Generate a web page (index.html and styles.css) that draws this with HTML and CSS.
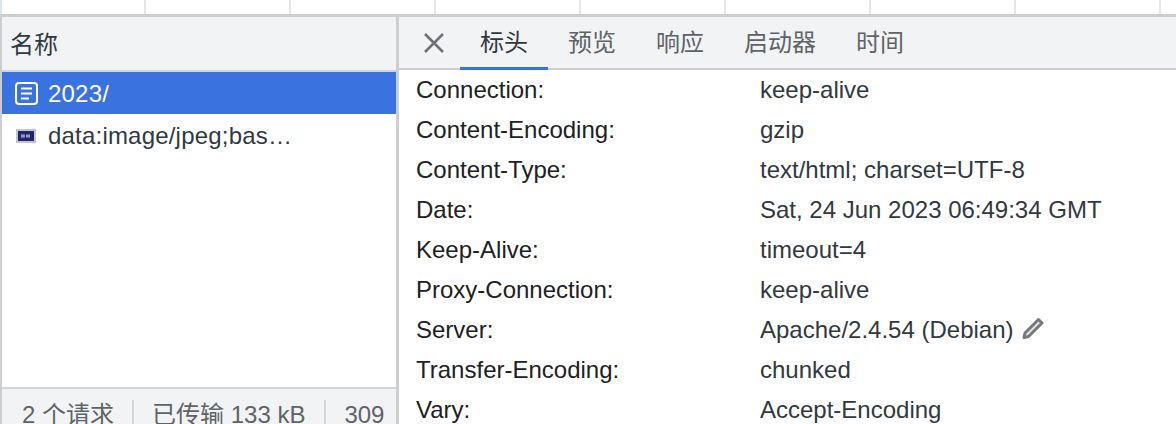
FILE: index.html
```html
<!DOCTYPE html>
<html lang="zh-CN">
<head>
    <meta charset="UTF-8">
    <title>Network</title>
    <link rel="stylesheet" href="styles.css">
</head>
<body>
    <div class="timeline">
        <div class="tick first"></div><div class="tick"></div><div class="tick"></div><div class="tick"></div>
        <div class="tick"></div><div class="tick"></div><div class="tick"></div><div class="tick"></div>
    </div>
    <div class="panels">
        <div class="requests">
            <div class="requests-head">名称</div>
            <div class="requests-list">
                <div class="request selected">
                    <svg class="doc-icon" width="23" height="23" viewBox="0 0 23 23">
                        <rect x="1" y="1" width="21" height="21" rx="3" fill="none" stroke="#fff" stroke-width="2"/>
                        <path d="M6 6.5h11M6 11.5h11M6 16.5h8" stroke="#fff" stroke-width="2" fill="none"/>
                    </svg>
                    <span>2023/</span>
                </div>
                <div class="request">
                    <svg class="thumb-icon" width="20" height="14" viewBox="0 0 20 14">
                        <rect width="20" height="14" fill="#c4c6cb"/>
                        <rect x="2" y="2" width="16" height="10" fill="#1f2a6e"/>
                        <path d="M5 7h10" stroke="#9a98cf" stroke-width="3" stroke-dasharray="4 1"/>
                    </svg>
                    <span>data:image/jpeg;bas…</span>
                </div>
            </div>
            <div class="summary">
                <span class="summary-item">2 个请求</span>
                <span class="summary-item">已传输 133 kB</span>
                <span class="summary-item">309</span>
            </div>
        </div>
        <div class="details">
            <div class="tabbar">
                <svg class="close-icon" width="22" height="22" viewBox="0 0 22 22">
                    <path d="M2 2l18 18M20 2L2 20" stroke="#6e7175" stroke-width="2.6" fill="none"/>
                </svg>
                <div class="tab active">标头</div>
                <div class="tab">预览</div>
                <div class="tab">响应</div>
                <div class="tab">启动器</div>
                <div class="tab">时间</div>
            </div>
            <div class="headers">
                <div class="header-row"><span class="header-name">Connection:</span><span class="header-value">keep-alive</span></div>
                <div class="header-row"><span class="header-name">Content-Encoding:</span><span class="header-value">gzip</span></div>
                <div class="header-row"><span class="header-name">Content-Type:</span><span class="header-value">text/html; charset=UTF-8</span></div>
                <div class="header-row"><span class="header-name">Date:</span><span class="header-value">Sat, 24 Jun 2023 06:49:34 GMT</span></div>
                <div class="header-row"><span class="header-name">Keep-Alive:</span><span class="header-value">timeout=4</span></div>
                <div class="header-row"><span class="header-name">Proxy-Connection:</span><span class="header-value">keep-alive</span></div>
                <div class="header-row">
                    <span class="header-name">Server:</span>
                    <span class="header-value">Apache/2.4.54 (Debian)</span>
                    <svg class="edit-icon" width="22" height="22" viewBox="0 0 22 22">
                        <path d="M16.5 2.5l3.5 3.5L6.5 19.5 2 20.5 3 16z" fill="#e4e4e6" stroke="#76787c" stroke-width="3" stroke-linejoin="round"/>
                    </svg>
                </div>
                <div class="header-row"><span class="header-name">Transfer-Encoding:</span><span class="header-value">chunked</span></div>
                <div class="header-row"><span class="header-name">Vary:</span><span class="header-value">Accept-Encoding</span></div>
            </div>
        </div>
    </div>
</body>
</html>
```

FILE: styles.css
```css
* {
    box-sizing: border-box;
}

body {
    margin: 0;
    width: 1176px;
    height: 424px;
    overflow: hidden;
    background: #fff;
    font-family: "Liberation Sans", "Noto Sans CJK SC", sans-serif;
    font-size: 24px;
    display: flex;
    flex-direction: column;
}

.timeline {
    height: 14px;
    flex: none;
    display: flex;
    border-left: 2px solid #dbe4f3;
}

.tick {
    width: 145px;
    flex: none;
    border-right: 2px solid #e6e6e8;
}

.tick.first {
    width: 144px;
}

.panels {
    flex: 1;
    min-height: 0;
    display: flex;
    border-top: 3px solid #cdced2;
}

.requests {
    width: 399px;
    flex: none;
    display: flex;
    flex-direction: column;
    border-left: 2px solid #cdced2;
    border-right: 3px solid #cdced2;
}

.requests-head {
    height: 55px;
    flex: none;
    padding: 0 8px 2px;
    display: flex;
    align-items: center;
    background: #f1f3f4;
    color: #303942;
    border-bottom: 2px solid #d4d5d8;
}

.requests-list {
    flex: 1;
    min-height: 0;
}

.request {
    height: 42px;
    display: flex;
    align-items: center;
    padding-left: 13px;
    color: #303942;
    letter-spacing: 0.2px;
}

.request span {
    padding-top: 2px;
}

.request.selected {
    background: #3a72e0;
    color: #fff;
}

.doc-icon {
    flex: none;
    margin-right: 10px;
}

.thumb-icon {
    flex: none;
    margin: 2px 12px 0 1px;
}

.summary {
    height: 37px;
    flex: none;
    display: flex;
    align-items: flex-start;
    padding-top: 11px;
    background: #f1f3f4;
    border-top: 2px solid #d4d5d8;
    color: #5f6368;
}

.summary-item {
    height: 26px;
    line-height: 30px;
    padding: 0 19px 0 18px;
    white-space: nowrap;
    border-right: 2px solid #d4d5d8;
}

.summary-item:first-child {
    padding-left: 20px;
    padding-right: 18px;
}

.summary-item:last-child {
    border-right: none;
}

.details {
    flex: 1;
    min-width: 0;
    display: flex;
    flex-direction: column;
}

.tabbar {
    height: 53px;
    flex: none;
    display: flex;
    background: #f1f3f4;
    border-bottom: 2px solid #cdced2;
    padding-left: 24px;
}

.close-icon {
    flex: none;
    align-self: center;
    margin-right: 15px;
}

.tab {
    height: 53px;
    padding: 0 20px 6px;
    display: flex;
    align-items: center;
    color: #5f6368;
    white-space: nowrap;
}

.tab.active {
    color: #303942;
    border-bottom: 3px solid #3a72e0;
    padding-bottom: 3px;
}

.headers {
    padding-left: 17px;
}

.header-row {
    height: 40px;
    display: flex;
    align-items: center;
}

.header-name {
    width: 344px;
    flex: none;
    color: #202124;
}

.header-value {
    color: #303942;
    white-space: nowrap;
}

.edit-icon {
    flex: none;
    margin: -4px 0 0 8px;
}
```
